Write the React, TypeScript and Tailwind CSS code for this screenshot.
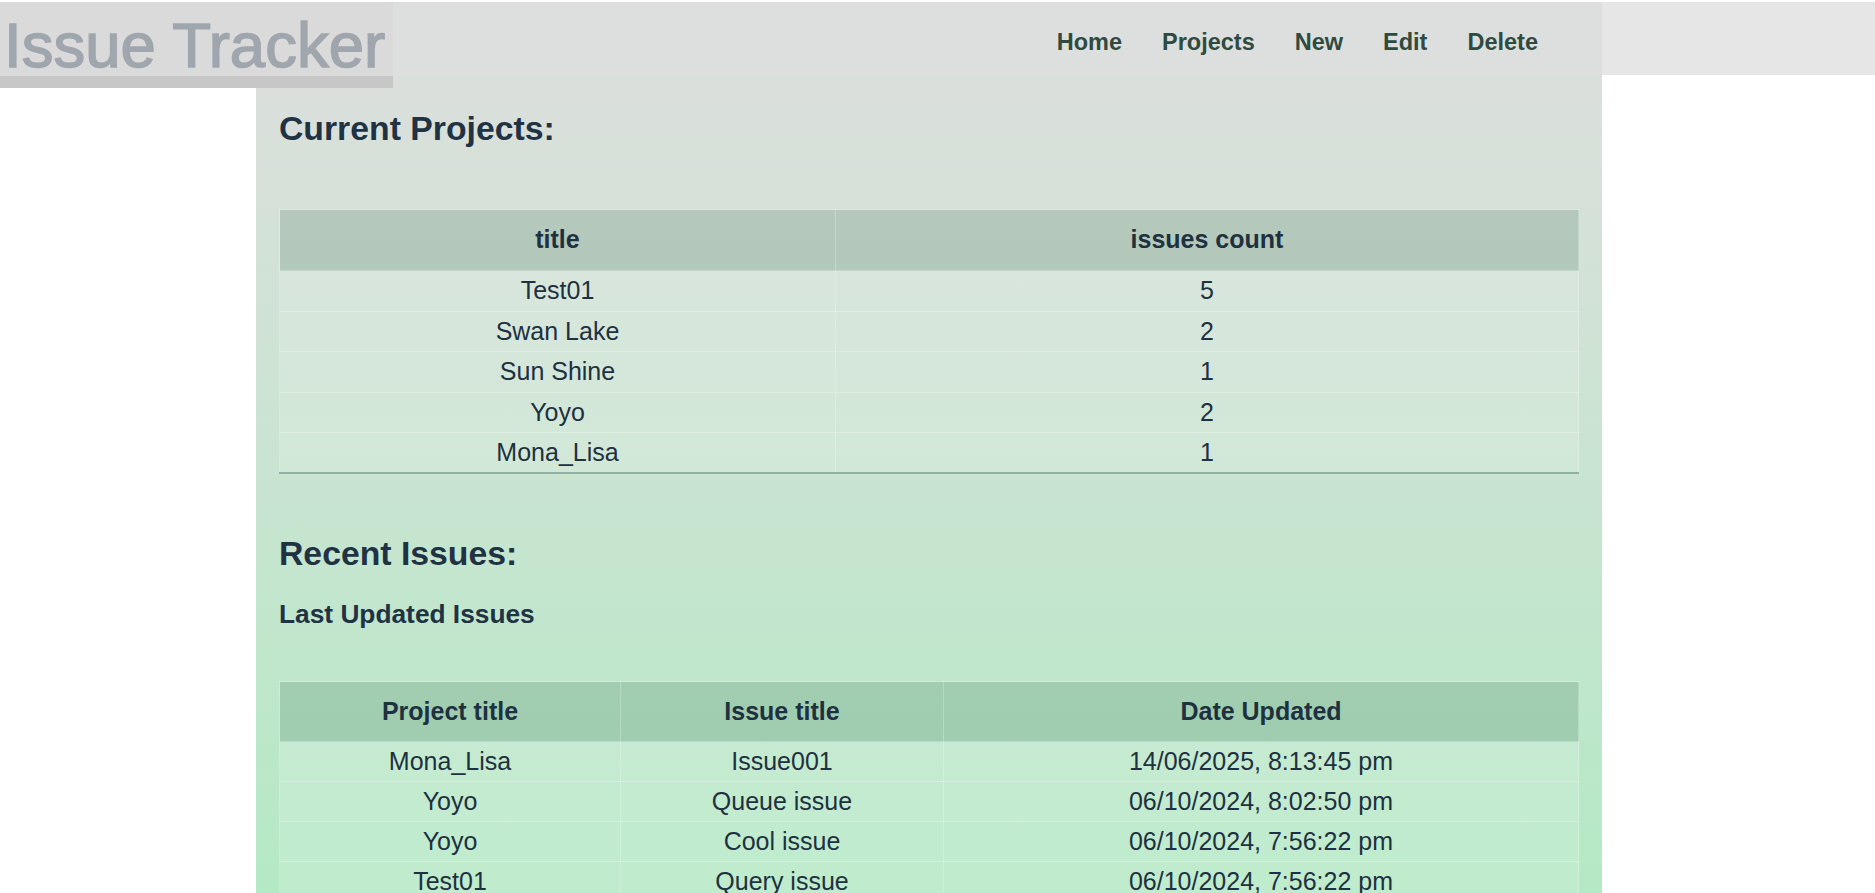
import React from 'react';

const navLinks = ['Home', 'Projects', 'New', 'Edit', 'Delete'];

const projects = [
  { title: 'Test01', count: 5 },
  { title: 'Swan Lake', count: 2 },
  { title: 'Sun Shine', count: 1 },
  { title: 'Yoyo', count: 2 },
  { title: 'Mona_Lisa', count: 1 },
];

const issues = [
  { project: 'Mona_Lisa', issue: 'Issue001', updated: '14/06/2025, 8:13:45 pm' },
  { project: 'Yoyo', issue: 'Queue issue', updated: '06/10/2024, 8:02:50 pm' },
  { project: 'Yoyo', issue: 'Cool issue', updated: '06/10/2024, 7:56:22 pm' },
  { project: 'Test01', issue: 'Query issue', updated: '06/10/2024, 7:56:22 pm' },
  { project: 'Sun Shine', issue: 'First issue', updated: '05/10/2024, 9:12:03 pm' },
];

export default function App() {
  return (
    <div className="relative h-[893px] overflow-hidden bg-white pt-[2px] font-['Liberation_Sans',Arial,sans-serif]">
      {/* top bar */}
      <header className="h-[73px] bg-[#e6e6e6]">
        <nav className="ml-[256px] flex h-full w-[1346px] items-center justify-end gap-[40px] bg-[#dcdfdd] pr-[64px] pt-[7px]">
          {navLinks.map((link) => (
            <a key={link} href="#" className="text-[23.5px] font-bold leading-[26px] text-[#2f4b40]">
              {link}
            </a>
          ))}
        </nav>
      </header>

      {/* logo sits over the bar */}
      <h1 className="absolute left-0 top-[2px] h-[86px] w-[393px] border-b-[12px] border-[#c8c7c7] bg-[#dadada] pl-[4px] pt-[12px] text-[63.5px] font-normal leading-none text-[#a0a6ad] [-webkit-text-stroke:1.5px_#a0a6ad]">
        Issue Tracker
      </h1>

      <main className="ml-[256px] h-[818px] w-[1346px] bg-linear-to-b from-[#dbdfdc] to-[#b4e9c5] px-[23px] pt-[33px] text-[#1f3344]">
        <h2 className="text-[33.75px] font-bold leading-[40px]">Current Projects:</h2>

        <table className="mt-[61px] w-full border-collapse text-[25px] text-[#1e3140]">
          <thead>
            <tr className="bg-[#003c1e]/15">
              <th className="h-[61px] w-[556px] border border-white/25 p-0 text-center font-bold">title</th>
              <th className="h-[61px] border border-white/25 p-0 text-center font-bold">issues count</th>
            </tr>
          </thead>
          <tbody className="border-b-2 border-b-[#8fb09e]">
            {projects.map((p) => (
              <tr key={p.title} className="bg-white/15">
                <td className="h-[40.6px] border border-white/25 p-0 text-center">{p.title}</td>
                <td className="h-[40.6px] border border-white/25 p-0 text-center">{p.count}</td>
              </tr>
            ))}
          </tbody>
        </table>

        <h2 className="mt-[59px] text-[33.75px] font-bold leading-[40px]">Recent Issues:</h2>
        <h3 className="mt-[26px] text-[26.3px] font-bold leading-[30px]">Last Updated Issues</h3>

        <table className="mt-[52px] w-full border-collapse text-[25px] text-[#1e3140]">
          <thead>
            <tr className="bg-[#003c1e]/15">
              <th className="h-[60px] w-[341px] border border-white/25 p-0 text-center font-bold">Project title</th>
              <th className="h-[60px] w-[323px] border border-white/25 p-0 text-center font-bold">Issue title</th>
              <th className="h-[60px] border border-white/25 p-0 text-center font-bold">Date Updated</th>
            </tr>
          </thead>
          <tbody>
            {issues.map((i, idx) => (
              <tr key={idx} className="bg-white/15">
                <td className="h-[40px] border border-white/25 p-0 text-center">{i.project}</td>
                <td className="h-[40px] border border-white/25 p-0 text-center">{i.issue}</td>
                <td className="h-[40px] border border-white/25 p-0 text-center">{i.updated}</td>
              </tr>
            ))}
          </tbody>
        </table>
      </main>
    </div>
  );
}
